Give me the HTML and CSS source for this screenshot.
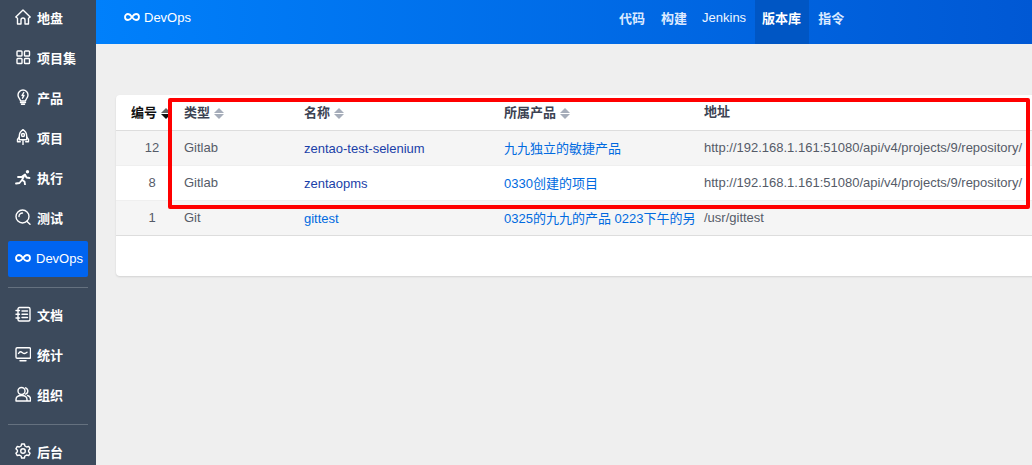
FILE: index.html
```html
<!DOCTYPE html>
<html lang="zh">
<head>
<meta charset="utf-8">
<title>DevOps</title>
<link rel="stylesheet" href="styles.css">
</head>
<body>
<div class="app">
  <aside class="sidebar">
    <nav class="menu">
      <a class="item"><svg class="ico" viewBox="0 0 16 16"><path d="M.8 8 8 1l7.200 7-1.700 1.300V15h-3.500v-4a2 2 0 0 0-4 0v4H2.500V9.300z"/></svg>地盘</a>
      <a class="item"><svg class="ico" viewBox="0 0 16 16"><rect x="2" y="2" width="5" height="5" rx=".8"/><rect x="9.500" y="2" width="5" height="5" rx=".8"/><rect x="2" y="9.500" width="5" height="5" rx=".8"/><rect x="9.500" y="9.500" width="5" height="5" rx=".8"/></svg>项目集</a>
      <a class="item"><svg class="ico" viewBox="0 0 16 16"><path d="M5.500 12c0-2-2.500-3-2.500-6a5 5 0 0 1 10 0c0 3-2.500 4-2.500 6z"/><path d="M5.500 13.500h5M6.500 15.300h3M8.800 3.500 7 6.500h2l-1.500 2.700"/></svg>产品</a>
      <a class="item"><svg class="ico" viewBox="0 0 16 16"><path d="M8 .6c2.800 1.800 3.700 4.200 3.700 6.400v3.700H4.300V7C4.300 4.800 5.200 2.400 8 .6z"/><circle cx="8" cy="6" r="1.500"/><path d="M4.300 8 2.500 10.500V12.800h2.800M11.700 8l1.800 2.500v2.300h-2.800M8 11.500v4"/></svg>项目</a>
      <a class="item"><svg class="ico" viewBox="0 0 16 16"><circle cx="12.500" cy="2.800" r="1.700" class="fill"/><path class="thick" d="M1 14.500l3.500-.5 2.500-3 2.500 1.500.5 3M3 8h3.500L10 5.500l1.500 3 3 .5M7 11l2.500-5"/></svg>执行</a>
      <a class="item"><svg class="ico" viewBox="0 0 16 16"><circle cx="7.500" cy="7.500" r="6.500"/><path d="M4 7.500A3.500 3.500 0 0 1 7.500 4M11.800 12.200 15 15.200"/></svg>测试</a>
      <a class="item active"><svg class="ico" viewBox="0 0 16 16"><path class="thick" d="M8 8C6.500 5.800 5.500 5 4 5a3 3 0 0 0 0 6c1.500 0 2.500-.8 4-3s2.500-3 4-3a3 3 0 0 1 0 6c-1.500 0-2.500-.8-4-3z"/></svg>DevOps</a>
      <div class="divider first"></div>
      <a class="item"><svg class="ico" viewBox="0 0 16 16"><rect x="3" y="1.500" width="12" height="13.500" rx="1.500"/><path d="M1 4.500h3.500M1 8.200h3.500M1 12h3.500M7 5h5.500M7 8.200h5.500M7 11.500h5.500"/></svg>文档</a>
      <a class="item"><svg class="ico" viewBox="0 0 16 16"><rect x="1" y="1.800" width="14.500" height="10.500" rx="1.200"/><path d="M3.500 7.500c1.500-2.500 2.500-2 4-.8s2.500 1.300 4.500-.5M5 14.800h6"/></svg>统计</a>
      <a class="item"><svg class="ico" viewBox="0 0 16 16"><circle cx="6.500" cy="5" r="3.500"/><path d="M1 15v-1.500c0-2.500 2-4 5.500-4s5.500 1.500 5.500 4V15zM10.500 1.800a3.300 3.300 0 0 1 0 6.300M12.500 9.500c1.800.5 3 1.800 3 3.500v2h-3"/></svg>组织</a>
      <div class="divider second"></div>
      <a class="item"><svg class="ico" viewBox="0 0 16 16"><path d="M6.600 1h2.800l.5 2 1.800 1 2-.6 1.400 2.400-1.500 1.400v1.600l1.500 1.400-1.400 2.400-2-.6-1.800 1-.5 2H6.600l-.5-2-1.800-1-2 .6L.9 10.200l1.500-1.400V7.200L.9 5.800l1.400-2.400 2 .6 1.800-1z"/><circle cx="8" cy="8" r="2.300"/></svg>后台</a>
    </nav>
  </aside>
  <div class="content">
    <header class="topbar">
      <div class="brand"><svg class="brand-ico" viewBox="0 0 16 16"><path class="thick" d="M8 8C6.500 5.800 5.500 5 4 5a3 3 0 0 0 0 6c1.500 0 2.500-.8 4-3s2.500-3 4-3a3 3 0 0 1 0 6c-1.500 0-2.500-.8-4-3z"/></svg>DevOps</div>
      <nav class="tabs">
        <a class="tab">代码</a>
        <a class="tab">构建</a>
        <a class="tab latin">Jenkins</a>
        <a class="tab current">版本库</a>
        <a class="tab">指令</a>
      </nav>
    </header>
    <main class="main">
      <section class="card">
        <table class="grid">
          <colgroup><col class="c-id"><col class="c-type"><col class="c-name"><col class="c-prod"><col></colgroup>
          <thead>
            <tr>
              <th class="th-id">编号<span class="sort down"></span></th>
              <th>类型<span class="sort"></span></th>
              <th>名称<span class="sort"></span></th>
              <th>所属产品<span class="sort"></span></th>
              <th class="th-addr">地址</th>
            </tr>
          </thead>
          <tbody>
            <tr class="odd">
              <td class="id">12</td><td>Gitlab</td>
              <td class="lnk"><a class="dark">zentao-test-selenium</a></td>
              <td class="prod"><a>九九独立的敏捷产品</a></td>
              <td>http://192.168.1.161:51080/api/v4/projects/9/repository/</td>
            </tr>
            <tr>
              <td class="id">8</td><td>Gitlab</td>
              <td class="lnk"><a class="dark">zentaopms</a></td>
              <td class="prod"><a>0330创建的项目</a></td>
              <td>http://192.168.1.161:51080/api/v4/projects/9/repository/</td>
            </tr>
            <tr class="odd last">
              <td class="id">1</td><td>Git</td>
              <td class="lnk"><a>gittest</a></td>
              <td class="prod"><a>0325的九九的产品 0223下午的另</a></td>
              <td>/usr/gittest</td>
            </tr>
          </tbody>
        </table>
      </section>
    </main>
  </div>
  <div class="highlight"></div>
</div>
</body>
</html>
```

FILE: styles.css
```css
* { box-sizing: border-box; }
html, body { margin: 0; padding: 0; height: 100%; overflow: hidden; }
body { font-family: "Liberation Sans", "Noto Sans CJK SC", sans-serif; font-size: 13px; color: #3c4353; background: #efefef; }
.app { display: flex; width: 1032px; height: 465px; position: relative; overflow: hidden; }

.sidebar { width: 96px; flex: none; background: #3c4a5c; }
.menu { display: flex; flex-direction: column; }
.item { display: flex; align-items: center; gap: 6px; height: 36px; flex: none; margin: 0 8px 4px; padding: 0 0 2px 7px; border-radius: 2px; color: #fff; font-size: 13px; font-weight: 700; }
.item.active { background: #0064f0; font-weight: 400; margin-top: 1px; gap: 5px; }
.ico { width: 16px; height: 16px; flex: none; fill: none; stroke: #fff; stroke-width: 1.400; stroke-linejoin: round; stroke-linecap: round; }
.ico .fill { fill: #fff; stroke: none; }
.thick { stroke-width: 1.800; }
.divider { height: 1px; flex: none; margin: 6px 8px 9px; background: #65717f; }
.divider.second { margin-top: 7px; }

.content { flex: 1; min-width: 0; display: flex; flex-direction: column; }
.topbar { height: 44px; flex: none; display: flex; padding-left: 28px; background: linear-gradient(90deg, #0080fb, #0058d4); color: #fff; }
.brand { width: 488px; height: 34px; display: flex; align-items: center; gap: 4px; font-size: 13px; }
.brand-ico { width: 16px; height: 16px; fill: none; stroke: #fff; }
.tabs { display: flex; gap: 2px; }
.tab { height: 44px; padding: 0 7px 9px; display: flex; align-items: center; color: #dbe9ff; font-size: 13px; font-weight: 700; }
.tab.latin { font-weight: 400; color: #eef5ff; margin-left: -1px; }
.tab.current { background: #0056c4; color: #fff; padding-right: 8px; }

.main { flex: 1; padding: 51px 0 0 20px; }
.card { width: 1000px; height: 181px; background: #fff; border-radius: 4px 0 0 4px; box-shadow: 0 1px 2px rgba(0, 0, 0, .12); overflow: hidden; }
.grid { width: 100%; border-collapse: collapse; table-layout: fixed; }
.c-id { width: 60px; }
.c-type { width: 120px; }
.c-name { width: 200px; }
.c-prod { width: 200px; }
th { height: 35px; padding: 0 8px 1px; text-align: left; font-size: 13px; font-weight: 700; color: #3c4353; border-bottom: 1px solid #ddd; white-space: nowrap; }
th.th-id { padding-left: 15px; color: #111; overflow: hidden; }
th.th-addr { padding-bottom: 3px; }
td { height: 35px; padding: 0 8px 1px; border-bottom: 1px solid #efefef; font-size: 13px; color: #555b68; white-space: nowrap; overflow: hidden; }
td.id { padding-left: 20px; text-align: center; }
td.lnk { padding-top: 1px; padding-bottom: 0; }
td.prod { padding-bottom: 1px; }
.last td { border-bottom-color: #ddd; }
.odd td { background: #f5f5f5; }
a { color: #006ae0; }
a.dark { color: #1a3fa8; }
.sort { display: inline-flex; flex-direction: column; gap: 1px; margin-left: 4px; vertical-align: middle; }
.sort::before { content: ""; border: solid transparent; border-width: 0 5px 5.500px; border-bottom-color: #a6adba; }
.sort::after { content: ""; border: solid transparent; border-width: 5.500px 5px 0; border-top-color: #a6adba; }
.sort.down::before { border-bottom-color: #666; }
.sort.down::after { border-top-color: #111; }

.highlight { position: absolute; left: 168px; top: 98px; width: 862px; height: 111px; border: 4px solid #f00; border-radius: 2px; }
```
